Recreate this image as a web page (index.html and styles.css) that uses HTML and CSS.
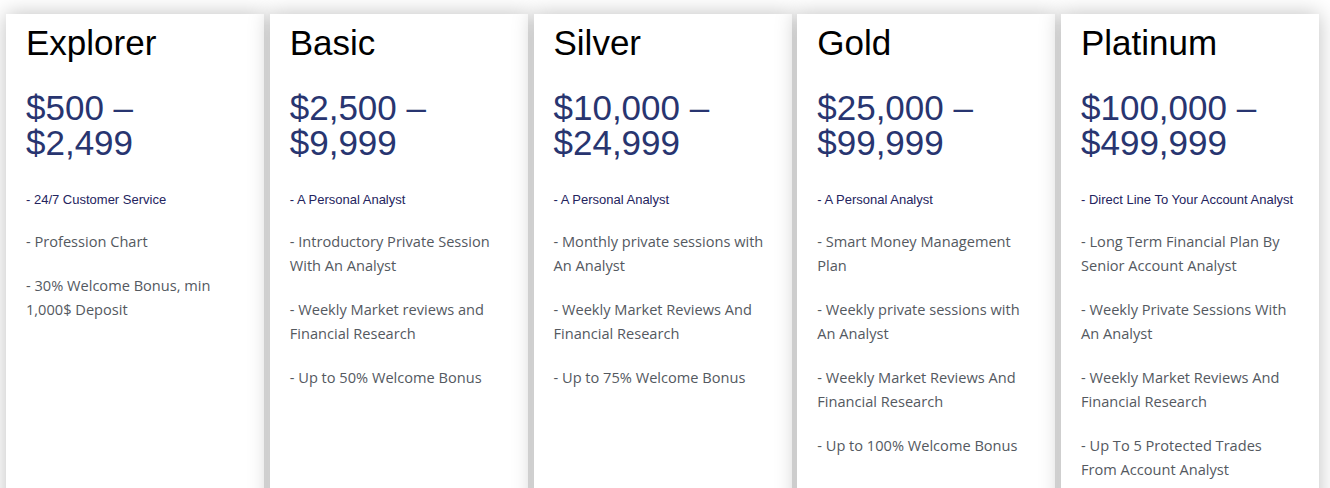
FILE: index.html
```html
<!DOCTYPE html>
<html lang="en">
<head>
<meta charset="utf-8">
<title>Account Plans</title>
<link rel="stylesheet" href="styles.css">
</head>
<body>
<main class="plans">
  <section class="plan">
    <h2 class="plan-title">Explorer</h2>
    <h3 class="plan-price">$500 –<br>$2,499</h3>
    <div class="plan-features">
      <p class="lead-row"><span class="lead">- 24/7 Customer Service</span></p>
      <p>- Profession Chart</p>
      <p>- 30% Welcome Bonus, min 1,000$ Deposit</p>
    </div>
  </section>
  <section class="plan">
    <h2 class="plan-title">Basic</h2>
    <h3 class="plan-price">$2,500 –<br>$9,999</h3>
    <div class="plan-features">
      <p class="lead-row"><span class="lead">- A Personal Analyst</span></p>
      <p>- Introductory Private Session With An Analyst</p>
      <p>- Weekly Market reviews and Financial Research</p>
      <p>- Up to 50% Welcome Bonus</p>
    </div>
  </section>
  <section class="plan">
    <h2 class="plan-title">Silver</h2>
    <h3 class="plan-price">$10,000 –<br>$24,999</h3>
    <div class="plan-features">
      <p class="lead-row"><span class="lead">- A Personal Analyst</span></p>
      <p>- Monthly private sessions with An Analyst</p>
      <p>- Weekly Market Reviews And Financial Research</p>
      <p>- Up to 75% Welcome Bonus</p>
    </div>
  </section>
  <section class="plan">
    <h2 class="plan-title">Gold</h2>
    <h3 class="plan-price">$25,000 –<br>$99,999</h3>
    <div class="plan-features">
      <p class="lead-row"><span class="lead">- A Personal Analyst</span></p>
      <p>- Smart Money Management Plan</p>
      <p>- Weekly private sessions with An Analyst</p>
      <p>- Weekly Market Reviews And Financial Research</p>
      <p>- Up to 100% Welcome Bonus</p>
    </div>
  </section>
  <section class="plan">
    <h2 class="plan-title">Platinum</h2>
    <h3 class="plan-price">$100,000 –<br>$499,999</h3>
    <div class="plan-features">
      <p class="lead-row"><span class="lead">- Direct Line To Your Account Analyst</span></p>
      <p>- Long Term Financial Plan By Senior Account Analyst</p>
      <p>- Weekly Private Sessions With An Analyst</p>
      <p>- Weekly Market Reviews And Financial Research</p>
      <p>- Up To 5 Protected Trades From Account Analyst</p>
    </div>
  </section>
</main>
</body>
</html>
```

FILE: styles.css
```css
html, body {
  margin: 0;
  padding: 0;
  background: #ffffff;
}

body {
  font-family: "Liberation Sans", Arial, sans-serif;
  overflow: hidden;
}

.plans {
  display: grid;
  grid-template-columns: repeat(5, 258px);
  column-gap: 5.75px;
  padding: 14px 0 0 6px;
}

.plan {
  background: #ffffff;
  box-shadow: 0 0 20px 0 rgba(0, 0, 0, 0.25);
  padding: 8px 20px 40px;
  min-height: 520px;
}

.plan-title {
  margin: 0;
  font-family: "Liberation Sans", Arial, sans-serif;
  font-weight: 400;
  font-size: 35px;
  line-height: 42px;
  color: #000000;
}

.plan-price {
  margin: 26px 0 26px;
  font-family: "Liberation Sans", Arial, sans-serif;
  font-weight: 400;
  font-size: 35px;
  line-height: 35px;
  color: #283570;
}

.plan-features p {
  margin: 0 0 20px;
  font-family: "Open Sans", "Noto Sans", sans-serif;
  font-size: 14.6px;
  line-height: 24px;
  color: #54595f;
}

.plan-features .lead-row {
  margin-bottom: 17px;
}

.plan-features .lead {
  font-family: "Liberation Sans", Arial, sans-serif;
  font-size: 13px;
  color: #24245e;
}
```
